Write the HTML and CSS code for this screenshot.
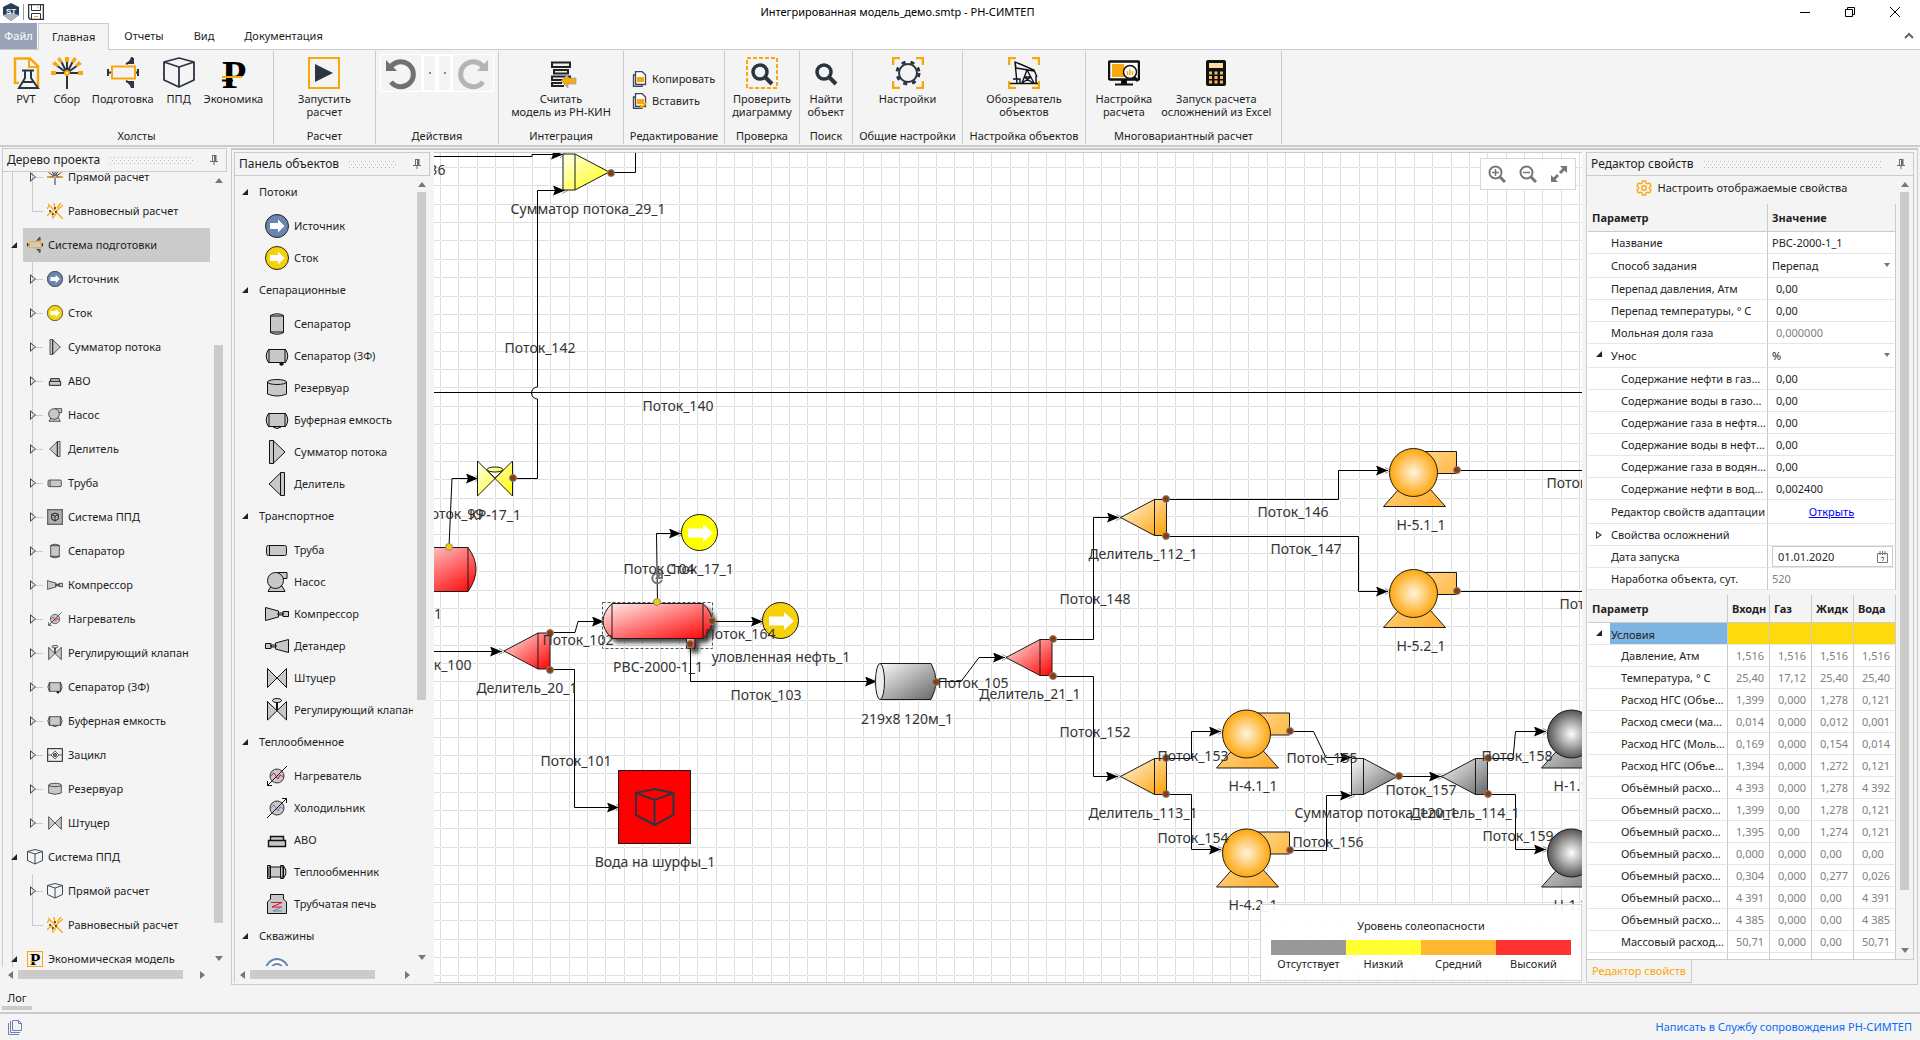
FILE: index.html
```html
<!DOCTYPE html>
<html lang="ru">
<head>
    <meta charset="UTF-8">
    <meta name="viewport" content="width=device-width, initial-scale=1.0">
    <title>Интегрированная модель_демо.smtp - РН-СИМТЕП</title>
    <link rel="stylesheet" href="styles.css">
</head>
<body>

<!-- Shared icons -->
<svg class="sprite" aria-hidden="true">
    <defs>
        <symbol id="i-pin" viewBox="0 0 8 10"><path d="M2 0.500H6.500M2.500 0V6M0 6.500H8M4 6V10" stroke="#6b6b6b" fill="none"/><path d="M4 1H6.500V6H4Z" fill="#6b6b6b"/></symbol>
        <symbol id="i-collect" viewBox="0 0 32 32">
            <path d="M16 18V32M16 16V4M16 16L10 4M16 16L22 4M16 16L5 8M16 16L27 8M3 16H29" stroke="#2b3542" stroke-width="2" fill="none"/>
            <path d="M14 0H18V5H14ZM6 2L9 0L12 5L9 6ZM26 2L23 0L20 5L23 6ZM1 7L4 4L8 8L6 10ZM31 7L28 4L24 8L26 10ZM0 14H5V18H0ZM27 14H32V18H27Z" fill="#f9a70b"/>
            <circle cx="16" cy="16" r="2" fill="#fff" stroke="#f9a70b" stroke-width="2"/>
        </symbol>
        <symbol id="i-prep" viewBox="0 0 32 32">
            <path d="M1 12V19M31 12V19M1 15.500H4M28 15.500H31M19 7Q24 5 25 0M19 24Q24 26 25 31M26 1V7M26 24V31" fill="none" stroke="#2b3542" stroke-width="2"/>
            <path d="M20 7L25 3V7ZM20 24L25 28V24Z" fill="#2b3542"/>
            <rect x="5" y="9.500" width="23" height="12" fill="none" stroke="#f9a70b" stroke-width="2"/>
        </symbol>
        <symbol id="i-cube" viewBox="0 0 32 32"><path d="M16 1L31 5V23L16 30L1 23V5ZM1 5L16 10L31 5M16 10V30" fill="none" stroke="#2b3542" stroke-width="1.800" stroke-linejoin="round"/></symbol>
        <symbol id="i-balance" viewBox="0 0 16 16"><path d="M1 1L16 16M0 13L5 8M5 8L6 16M2 3L0 6M10 5L14 0M9 8L16 2M8 7L7 0M7 14L10 8" stroke="#f9a70b" stroke-width="1.300" fill="none"/><g fill="#2b3542"><circle cx="3" cy="8" r="1"/><circle cx="8" cy="5" r="1"/><circle cx="9" cy="9" r="1"/><circle cx="6" cy="11" r="1"/></g></symbol>
        <symbol id="i-ruble" viewBox="0 0 16 16"><rect x="0.500" y="0.500" width="15" height="15" fill="none" stroke="#f9a70b"/><text x="3" y="14" font-family="Liberation Serif, serif" font-weight="bold" font-size="17">Р</text><path d="M3 10.500H9" stroke="#f9a70b"/></symbol>
        <symbol id="i-source" viewBox="0 0 24 24"><circle cx="12" cy="12" r="11.500" fill="#6985b0" stroke="#222"/><path d="M5 9h8V5.500L19.500 12 13 18.500V15H5z" fill="#fff"/></symbol>
        <symbol id="i-sink" viewBox="0 0 24 24"><circle cx="12" cy="12" r="11.500" fill="#f5d10a" stroke="#222"/><path d="M5 9h8V5.500L19.500 12 13 18.500V15H5z" fill="#fff"/></symbol>
        <symbol id="i-sum" viewBox="0 0 24 24"><path d="M4.500 0.500H8.500V23.500H4.500ZM8.500 1L20 12L8.500 23Z" fill="#c8c8c8" stroke="#111"/></symbol>
        <symbol id="i-split" viewBox="0 0 24 24"><path d="M15.500 0.500H19.500V23.500H15.500ZM15.500 1L4 12L15.500 23Z" fill="#c8c8c8" stroke="#111"/></symbol>
        <symbol id="i-avo" viewBox="0 0 24 24"><path d="M3.500 12.500H20.500V18.500H3.500ZM5.500 12V8.500H18.500V12" fill="#c8c8c8" stroke="#111" stroke-width="1.400"/></symbol>
        <symbol id="i-pump" viewBox="0 0 24 24"><path d="M12 2.500H22V8.500H17M3 21.500L6 16H17L20 21.500Z" fill="#c8c8c8" stroke="#111"/><circle cx="10.500" cy="10.500" r="8" fill="#c8c8c8" stroke="#111"/></symbol>
        <symbol id="i-pipe" viewBox="0 0 24 24"><rect x="1.500" y="7.500" width="20" height="10" rx="2" fill="#c8c8c8" stroke="#111"/><path d="M4.500 8V17" stroke="#111"/></symbol>
        <symbol id="i-ppd" viewBox="0 0 24 24"><rect x="1" y="1" width="22" height="22" fill="#b0b0b0" stroke="#666" stroke-width="2"/><path d="M12 6L17 8V15L12 18L7 15V8ZM7 8L12 11L17 8M12 11V18" fill="none" stroke="#222" stroke-width="1.500"/></symbol>
        <symbol id="i-sep" viewBox="0 0 24 24"><path d="M5.500 3.500Q12 0 18.500 3.500V20.500Q12 24 5.500 20.500ZM5.500 4H18.500M5.500 20H18.500" fill="#c8c8c8" stroke="#111"/></symbol>
        <symbol id="i-sep3" viewBox="0 0 24 24"><path d="M3.500 5.500Q-1 12 3.500 18.500H20.500Q25 12 20.500 5.500ZM4 5V19M20 5V19" fill="#c8c8c8" stroke="#111"/><path d="M15 19h3v2h-3z" stroke="#111"/></symbol>
        <symbol id="i-buffer" viewBox="0 0 24 24"><path d="M3.500 5.500Q-1 12 3.500 18.500H20.500Q25 12 20.500 5.500ZM4 5V19M20 5V19M8 19Q12 22 16 19" fill="#c8c8c8" stroke="#111"/></symbol>
        <symbol id="i-tank" viewBox="0 0 24 24"><path d="M2.500 6V18Q12 22 21.500 18V6" fill="#c8c8c8" stroke="#111"/><ellipse cx="12" cy="6" rx="9.500" ry="2.500" fill="#c8c8c8" stroke="#111"/></symbol>
        <symbol id="i-comp" viewBox="0 0 24 24"><path d="M0.500 5.500L13.500 9V15L0.500 18.500ZM13 11H18V13H13ZM18 9.500H23.500V14.500H18Z" fill="#c8c8c8" stroke="#111"/></symbol>
        <symbol id="i-exp" viewBox="0 0 24 24"><path d="M23.500 5.500L10.500 9V15L23.500 18.500ZM6 11H11V13H6ZM0.500 9.500H6V14.500H0.500Z" fill="#c8c8c8" stroke="#111"/></symbol>
        <symbol id="i-choke" viewBox="0 0 24 24"><path d="M2.500 2.500L21.500 21.500V2.500L2.500 21.500Z" fill="#c8c8c8" stroke="#111"/></symbol>
        <symbol id="i-valve" viewBox="0 0 24 24"><path d="M2.500 3.500L21.500 22V3.500L2.500 22Z" fill="#c8c8c8" stroke="#111"/><path d="M12 3V12" stroke="#111" stroke-width="2"/><ellipse cx="12" cy="2.500" rx="4.500" ry="2" fill="#ddd" stroke="#111"/></symbol>
        <symbol id="i-heater" viewBox="0 0 24 24"><circle cx="12" cy="12" r="7" fill="#c8c8c8" stroke="#333"/><path d="M5.500 12L9 9L13 15L15 11L19 13" fill="none" stroke="#d01040"/><path d="M22 2L2.500 21.500M2.500 17V21.500H7" fill="none" stroke="#111"/></symbol>
        <symbol id="i-cooler" viewBox="0 0 24 24"><circle cx="12" cy="12" r="7" fill="#c8c8c8" stroke="#333"/><path d="M5.500 12L9 9L13 15L15 11L19 13" fill="none" stroke="#6985b0"/><path d="M2 22L21.500 2.500M17 2.500H21.500V7" fill="none" stroke="#111"/></symbol>
        <symbol id="i-exch" viewBox="0 0 24 24"><path d="M4 7H18V17H4ZM2.500 5.500H5.500V18.500H2.500ZM15.500 5.500H18.500V18.500H15.500ZM18.500 6Q23.500 12 18.500 18Z" fill="#c8c8c8" stroke="#111"/></symbol>
        <symbol id="i-furnace" viewBox="0 0 24 24"><path d="M5.500 2.500H18.500V7L21.500 10V21.500H2.500V10L5.500 7Z" fill="#c8c8c8" stroke="#111"/><path d="M6 10.500H17L7 15H17" fill="none" stroke="#d01040"/><path d="M17 15L8 19H17" fill="none" stroke="#6985b0"/></symbol>
        <symbol id="i-cycle" viewBox="0 0 24 24"><rect x="1" y="2.500" width="22" height="19" fill="#eee" stroke="#222" stroke-width="1.500"/><path d="M1 12H6L12 6L18 12L12 18L6 12M18 12H23" fill="none" stroke="#222"/><circle cx="12" cy="12" r="2.500" fill="#777" stroke="#222"/></symbol>
        <symbol id="i-well" viewBox="0 0 24 24"><circle cx="12" cy="12" r="11" fill="#fff" stroke="#6985b0" stroke-width="2"/><circle cx="12" cy="12" r="6" fill="none" stroke="#6985b0" stroke-width="2"/></symbol>
        <symbol id="i-gear" viewBox="0 0 16 16"><path d="M6.500 1h3l.5 2 1.500.8 2-.6L15 6l-1.500 1.300v1.400L15 10l-1.500 2.800-2-.6-1.500.8-.5 2h-3L6 13l-1.500-.8-2 .6L1 10l1.500-1.300V7.300L1 6l1.500-2.800 2 .6L6 3z" fill="none" stroke="#f9a70b" stroke-width="1.400"/><circle cx="8" cy="8" r="2.200" fill="none" stroke="#f9a70b" stroke-width="1.400"/></symbol>
        <symbol id="i-copy" viewBox="0 0 16 16"><path d="M3 4H1.500V15.500H10V14M3.500 0.500H10L13.500 4V13.500H3.500Z" fill="#fff" stroke="#3a4656" stroke-width="1.300"/><path d="M5 6H12V11H5Z" fill="#f9a70b"/></symbol>
        <symbol id="i-lens" viewBox="0 0 24 24"><circle cx="10" cy="10" r="7" fill="none" stroke="#2b3542" stroke-width="3.500"/><path d="M15 15L22 22" stroke="#2b3542" stroke-width="4"/></symbol>
        <symbol id="i-undo" viewBox="0 0 36 34"><path d="M7 12A12.500 12.500 0 1 1 8 26" fill="none" stroke="currentColor" stroke-width="5"/><path d="M3 4V15H14Z" fill="currentColor"/></symbol>

        <linearGradient id="red" x2="1" y2="1"><stop offset="0" stop-color="#fff0f0"/><stop offset="1" stop-color="#f00"/></linearGradient>
        <linearGradient id="orange" x2="1" y2="1"><stop offset="0" stop-color="#fff6e6"/><stop offset="1" stop-color="#ffa000"/></linearGradient>
        <linearGradient id="sand" x2="1" y2="1"><stop offset="0" stop-color="#ffe2b0"/><stop offset="1" stop-color="#ffa818"/></linearGradient>
        <linearGradient id="yellow" x2="1" y2="1"><stop offset="0" stop-color="#fffff0"/><stop offset="1" stop-color="#ff0"/></linearGradient>
        <linearGradient id="gray" x2="1" y2="1"><stop offset="0" stop-color="#fafafa"/><stop offset="1" stop-color="#666"/></linearGradient>
        <radialGradient id="orange-ball"><stop offset="0" stop-color="#fff4dc"/><stop offset="1" stop-color="#ffa60d"/></radialGradient>
        <radialGradient id="gray-ball"><stop offset="0" stop-color="#fff"/><stop offset="1" stop-color="#555"/></radialGradient>
        <marker id="arrow" markerUnits="userSpaceOnUse" markerWidth="16" markerHeight="10" refX="12" refY="5" orient="auto">
            <path d="M9 2L15 5L9 8" fill="none" stroke="#999"/>
            <path d="M0 0L12 5L0 10L2 5Z" fill="#000"/>
        </marker>
        <filter id="shadow" x="-10%" y="-20%" width="130%" height="170%"><feDropShadow dx="4" dy="4" stdDeviation="2" flood-opacity="0.700"/></filter>
        <path id="divider" d="M0 18L34 0H46V36H34ZM34 0V36" stroke="#1a1a1a"/>
        <path id="summator" d="M0 0H12L46 18L12 36H0ZM12 0V36" stroke="#1a1a1a"/>
        <circle id="port" r="3.500" fill="#8b3c0c" stroke="#8a8a8a"/>
        <circle id="gas-port" r="3.500" fill="#f5c800" stroke="#8a8a8a"/>
        <g id="pump" stroke="#1a1a1a">
            <path d="M0 -21H43V1H0ZM-30 34L-14 16H16L32 34Z" fill="url(#sand)"/>
            <circle r="24" fill="url(#orange-ball)"/>
        </g>
        <g id="pump-off" stroke="#1a1a1a">
            <path d="M0 -21H43V1H0ZM-30 34L-14 16H16L32 34Z" fill="url(#gray)"/>
            <circle r="24" fill="url(#gray-ball)"/>
        </g>
        <!-- 8 cells per tile -->
        <pattern id="grid" x="440" y="167" width="147" height="147" patternUnits="userSpaceOnUse">
            <path d="M0 0H147V1H0ZM0 18H147V19H0ZM0 37H147V38H0ZM0 55H147V56H0ZM0 73H147V74H0ZM0 92H147V93H0ZM0 110H147V111H0ZM0 129H147V130H0ZM0 0V147H1V0ZM18 0V147H19V0ZM37 0V147H38V0ZM55 0V147H56V0ZM73 0V147H74V0ZM92 0V147H93V0ZM110 0V147H111V0ZM129 0V147H130V0Z" fill="#dedede"/>
        </pattern>
    </defs>
</svg>

<header class="titlebar">
    <div class="quick">
        <svg width="16" height="18" viewBox="0 0 16 18"><path d="M8 0L16 4V12L8 18L0 12V4Z" fill="#24405e"/><path d="M0 12L8 10L16 12L8 18Z" fill="#a9b5c5"/><text x="3" y="11" class="logo-text">ST</text></svg>
        <span class="sep"></span>
        <button aria-label="Сохранить"><svg width="16" height="16" viewBox="0 0 16 16"><path d="M0.500 0.500H15.500V15.500H2.500L0.500 13.500Z" fill="none" stroke="#2b3542" stroke-width="1.500"/><path d="M3.500 1V6.500H12.500V1M3.500 15V9.500H12.500V15" fill="none" stroke="#2b3542"/><path d="M10 2.500V4.500M6 12.500H10" stroke="#f9a70b"/></svg></button>
    </div>
    <h1>Интегрированная модель_демо.smtp - РН-СИМТЕП</h1>
    <div class="window-buttons">
        <button aria-label="Свернуть"><svg width="12" height="12"><path d="M1 6.500H11" stroke="#000"/></svg></button>
        <button aria-label="Восстановить"><svg width="12" height="12"><path d="M1.500 3.500H8.500V10.500H1.500ZM3.500 3V1.500H10.500V8.500H9" fill="none" stroke="#000"/></svg></button>
        <button aria-label="Закрыть"><svg width="12" height="12"><path d="M1 1L11 11M11 1L1 11" stroke="#000"/></svg></button>
    </div>
</header>

<nav class="tabs">
    <button class="file">Файл</button>
    <button class="active">Главная</button>
    <button>Отчеты</button>
    <button>Вид</button>
    <button>Документация</button>
    <button class="collapse" aria-label="Свернуть ленту"><svg width="10" height="8"><path d="M1 6L5 2L9 6" fill="none" stroke="#666" stroke-width="2"/></svg></button>
</nav>

<section class="ribbon">
    <div class="group canvases">
        <div class="tools">
            <button class="big"><svg width="32" height="32" viewBox="0 0 32 32"><path d="M9 26H5V1.500H20L28 9V30" fill="none" stroke="#f9a70b" stroke-width="2.500"/><path d="M19 1V10H28" fill="none" stroke="#f9a70b" stroke-width="2"/><path d="M12 13.500H24M15 14V21L9 31H28L21 21V14M13 25H23" fill="none" stroke="#2b3542" stroke-width="2"/></svg>PVT</button>
            <button class="big"><svg width="32" height="32"><use href="#i-collect"/></svg>Сбор</button>
            <button class="big"><svg width="32" height="32"><use href="#i-prep"/></svg>Подготовка</button>
            <button class="big"><svg width="32" height="32"><use href="#i-cube"/></svg>ППД</button>
            <button class="big"><svg width="32" height="32"><text x="5" y="31" class="ruble">Р</text><path d="M5 23.500H16" stroke="#000" stroke-width="2"/><path d="M5 20H25" stroke="#f9a70b" stroke-width="2"/></svg>Экономика</button>
        </div>
        <h2>Холсты</h2>
    </div>
    <div class="group run">
        <div class="tools">
            <button class="big"><svg width="32" height="32"><rect x="1" y="1" width="30" height="30" fill="none" stroke="#f9a70b" stroke-width="2"/><path d="M7 7L25 16L7 25Z" fill="#2b3542"/></svg>Запустить<br>расчет</button>
        </div>
        <h2>Расчет</h2>
    </div>
    <div class="group actions">
        <div class="tools history">
            <button class="undo" aria-label="Отменить"><svg width="36" height="34"><use href="#i-undo"/></svg></button>
            <button class="drop" aria-label="Список отмены"><i></i></button>
            <button class="drop" aria-label="Список повтора"><i></i></button>
            <button class="redo" aria-label="Повторить"><svg width="36" height="34"><use href="#i-undo"/></svg></button>
        </div>
        <h2>Действия</h2>
    </div>
    <div class="group integration">
        <div class="tools">
            <button class="big"><svg width="32" height="32"><path d="M7 5.500H25V10H7ZM9 13H23V16.500H9ZM7 19.500H25V23H7ZM17 26H7V29H19" fill="#eee" stroke="#222" stroke-width="2"/><path d="M16 24L23 17V21H31V27H23V31Z" fill="#f9a70b" stroke="#6fa8dc" stroke-width="0.700"/></svg>Считать<br>модель из РН-КИН</button>
        </div>
        <h2>Интеграция</h2>
    </div>
    <div class="group editing">
        <div class="tools stack">
            <button><svg width="16" height="16"><use href="#i-copy"/></svg>Копировать</button>
            <button><svg width="16" height="16"><use href="#i-copy"/><path d="M8 12L10 14L14 10" fill="none" stroke="#f9a70b" stroke-width="2"/></svg>Вставить</button>
        </div>
        <h2>Редактирование</h2>
    </div>
    <div class="group check">
        <div class="tools">
            <button class="big"><svg width="32" height="32"><rect x="1" y="1" width="30" height="30" fill="none" stroke="#f9a70b" stroke-width="2" stroke-dasharray="4 2"/><use href="#i-lens" x="4" y="5" width="24" height="24"/></svg>Проверить<br>диаграмму</button>
        </div>
        <h2>Проверка</h2>
    </div>
    <div class="group search">
        <div class="tools">
            <button class="big"><svg width="32" height="32"><use href="#i-lens" x="4" y="5" width="24" height="24"/></svg>Найти<br>объект</button>
        </div>
        <h2>Поиск</h2>
    </div>
    <div class="group settings">
        <div class="tools">
            <button class="big"><svg width="32" height="32"><path d="M1 8V1H8M24 1H31V8M31 24V31H24M8 31H1V24" fill="none" stroke="#f9a70b" stroke-width="2.500"/><circle cx="16" cy="16" r="9" fill="none" stroke="#2b3542" stroke-width="2"/><circle cx="16" cy="16" r="11" fill="none" stroke="#2b3542" stroke-width="3" stroke-dasharray="4 5"/></svg>Настройки</button>
        </div>
        <h2>Общие настройки</h2>
    </div>
    <div class="group objects-setup">
        <div class="tools">
            <button class="big"><svg width="32" height="32"><path d="M1 8V1H8M24 1H31V8M31 24V31H24M8 31H1V24" fill="none" stroke="#f9a70b" stroke-width="2.500"/><path d="M2 26.500H30M9 26L7 5L12 7L26 13L29 20M7 5L8 11L26 14M19 13L14 26M19 13L26 26M16 20H23M14 26L23 20M25 26L16 20M5 22H12V26M28 19V26" fill="none" stroke="#111" stroke-width="1.400"/></svg>Обозреватель<br>объектов</button>
        </div>
        <h2>Настройка объектов</h2>
    </div>
    <div class="group multi">
        <div class="tools">
            <button class="big"><svg width="32" height="32"><rect x="1" y="4.500" width="30" height="18" rx="1" fill="#fff" stroke="#111" stroke-width="2.500"/><path d="M4 7H16V20H4Z" fill="#f9a70b"/><path d="M7 27.500H25M14 23V27H18V23" stroke="#111" stroke-width="2"/><circle cx="22" cy="15" r="6.500" fill="#fff" stroke="#111" stroke-width="1.500"/><path d="M19.500 18V14M22 18V12M24.500 18V14" stroke="#f9a70b" stroke-width="1.500"/><path d="M26 20L30 24" stroke="#111" stroke-width="2.500"/></svg>Настройка<br>расчета</button>
            <button class="big"><svg width="32" height="32"><rect x="6" y="3" width="20" height="26" rx="2" fill="#111"/><path d="M9 6H23V11H9Z" fill="#ffd9a0"/><path d="M9 16H23M9 20.500H23M9 25H23" stroke="#f9b95a" stroke-width="3" stroke-dasharray="3 2.500"/></svg>Запуск расчета<br>осложнений из Excel</button>
        </div>
        <h2>Многовариантный расчет</h2>
    </div>
</section>

<main class="workspace">

    <aside class="project">
        <div class="panel-head">
            <h3>Дерево проекта</h3><span class="grip"></span>
            <button aria-label="Закрепить"><svg width="8" height="10"><use href="#i-pin"/></svg></button>
        </div>
        <div class="panel-body">
            <div class="view">
                <ul class="tree">
                    <li class="leaf closed"><svg><use href="#i-collect"/></svg>Прямой расчет</li>
                    <li class="leaf last"><svg><use href="#i-balance"/></svg>Равновесный расчет</li>
                    <li class="root selected"><span><svg><use href="#i-prep"/></svg>Система подготовки</span></li>
                    <li class="leaf closed"><svg><use href="#i-source"/></svg>Источник</li>
                    <li class="leaf closed"><svg><use href="#i-sink"/></svg>Сток</li>
                    <li class="leaf closed"><svg><use href="#i-sum"/></svg>Сумматор потока</li>
                    <li class="leaf closed"><svg><use href="#i-avo"/></svg>АВО</li>
                    <li class="leaf closed"><svg><use href="#i-pump"/></svg>Насос</li>
                    <li class="leaf closed"><svg><use href="#i-split"/></svg>Делитель</li>
                    <li class="leaf closed"><svg><use href="#i-pipe"/></svg>Труба</li>
                    <li class="leaf closed"><svg><use href="#i-ppd"/></svg>Система ППД</li>
                    <li class="leaf closed"><svg><use href="#i-sep"/></svg>Сепаратор</li>
                    <li class="leaf closed"><svg><use href="#i-comp"/></svg>Компрессор</li>
                    <li class="leaf closed"><svg><use href="#i-heater"/></svg>Нагреватель</li>
                    <li class="leaf closed"><svg><use href="#i-valve"/></svg>Регулирующий клапан</li>
                    <li class="leaf closed"><svg><use href="#i-sep3"/></svg>Сепаратор (3Ф)</li>
                    <li class="leaf closed"><svg><use href="#i-buffer"/></svg>Буферная емкость</li>
                    <li class="leaf closed"><svg><use href="#i-cycle"/></svg>Зацикл</li>
                    <li class="leaf closed"><svg><use href="#i-tank"/></svg>Резервуар</li>
                    <li class="leaf closed last"><svg><use href="#i-choke"/></svg>Штуцер</li>
                    <li class="root"><span><svg><use href="#i-cube"/></svg>Система ППД</span></li>
                    <li class="leaf closed"><svg><use href="#i-cube"/></svg>Прямой расчет</li>
                    <li class="leaf last"><svg><use href="#i-balance"/></svg>Равновесный расчет</li>
                    <li class="root"><span><svg><use href="#i-ruble"/></svg>Экономическая модель</span></li>
                </ul>
            </div>
            <div class="vscroll"><b class="up"></b><i class="track tree-v"></i><b class="down"></b></div>
        </div>
        <div class="hscroll"><b class="left"></b><i class="track tree-h"></i><b class="right"></b></div>
    </aside>

    <div class="dock">
        <aside class="palette">
            <div class="panel-head">
                <h3>Панель объектов</h3><span class="grip"></span>
                <button aria-label="Закрепить"><svg width="8" height="10"><use href="#i-pin"/></svg></button>
            </div>
            <div class="panel-body">
                <div class="view">
                    <h4>Потоки</h4>
                    <ul>
                        <li><svg><use href="#i-source"/></svg>Источник</li>
                        <li><svg><use href="#i-sink"/></svg>Сток</li>
                    </ul>
                    <h4>Сепарационные</h4>
                    <ul>
                        <li><svg><use href="#i-sep"/></svg>Сепаратор</li>
                        <li><svg><use href="#i-sep3"/></svg>Сепаратор (3Ф)</li>
                        <li><svg><use href="#i-tank"/></svg>Резервуар</li>
                        <li><svg><use href="#i-buffer"/></svg>Буферная емкость</li>
                        <li><svg><use href="#i-sum"/></svg>Сумматор потока</li>
                        <li><svg><use href="#i-split"/></svg>Делитель</li>
                    </ul>
                    <h4>Транспортное</h4>
                    <ul>
                        <li><svg><use href="#i-pipe"/></svg>Труба</li>
                        <li><svg><use href="#i-pump"/></svg>Насос</li>
                        <li><svg><use href="#i-comp"/></svg>Компрессор</li>
                        <li><svg><use href="#i-exp"/></svg>Детандер</li>
                        <li><svg><use href="#i-choke"/></svg>Штуцер</li>
                        <li><svg><use href="#i-valve"/></svg>Регулирующий клапан</li>
                    </ul>
                    <h4>Теплообменное</h4>
                    <ul>
                        <li><svg><use href="#i-heater"/></svg>Нагреватель</li>
                        <li><svg><use href="#i-cooler"/></svg>Холодильник</li>
                        <li><svg><use href="#i-avo"/></svg>АВО</li>
                        <li><svg><use href="#i-exch"/></svg>Теплообменник</li>
                        <li><svg><use href="#i-furnace"/></svg>Трубчатая печь</li>
                    </ul>
                    <h4>Скважины</h4>
                    <ul>
                        <li><svg><use href="#i-well"/></svg></li>
                    </ul>
                </div>
                <div class="vscroll"><b class="up"></b><i class="track palette-v"></i><b class="down"></b></div>
            </div>
            <div class="hscroll"><b class="left"></b><i class="track palette-h"></i><b class="right"></b></div>
        </aside>

        <section class="canvas">
            <svg class="scheme" width="100%" height="100%">
                <g transform="translate(-434 -153)">
                    <rect x="434" y="153" width="100%" height="100%" fill="url(#grid)"/>

                    <g class="pipes">
                        <path d="M434 156.500H532V154.500H563" marker-end="url(#arrow)"/>
                        <path d="M611 172.500H635.500V150"/>
                        <path d="M513 478.500H537.500V399A6 6 0 0 1 537.500 387V190.500H565" marker-end="url(#arrow)"/>
                        <path d="M434 392.500H1600"/>
                        <path d="M449 547L452 478.500H478" marker-end="url(#arrow)"/>
                        <path d="M434 651.500H502" marker-end="url(#arrow)"/>
                        <path d="M550 632.500H575L578 621.500H604" marker-end="url(#arrow)"/>
                        <path d="M550 669.500H574.500V807.500H619" marker-end="url(#arrow)"/>
                        <path d="M657.500 602L656.500 533.500H681" marker-end="url(#arrow)"/>
                        <path d="M713 621.500H763" marker-end="url(#arrow)"/>
                        <path d="M690.500 646V681.500H877" marker-end="url(#arrow)"/>
                        <path d="M937 681.500H961L979 657.500H1005" marker-end="url(#arrow)"/>
                        <path d="M1053 639.500H1093.500V517.500H1119" marker-end="url(#arrow)"/>
                        <path d="M1053 676.500H1093.500V776.500H1118" marker-end="url(#arrow)"/>
                        <path d="M1166 499.500H1338.500V470.500H1388" marker-end="url(#arrow)"/>
                        <path d="M1166 536.500H1358.500V591.500H1388" marker-end="url(#arrow)"/>
                        <path d="M1457 470.500H1600M1457 591.500H1600"/>
                        <path d="M1166 758.500H1191.500V731.500H1221" marker-end="url(#arrow)"/>
                        <path d="M1166 794.500H1191.500V849.500H1221" marker-end="url(#arrow)"/>
                        <path d="M1290 731.500H1313.500L1326 757.500H1352" marker-end="url(#arrow)"/>
                        <path d="M1290 850.500H1326.500V795.500H1352" marker-end="url(#arrow)"/>
                        <path d="M1400 776.500H1441" marker-end="url(#arrow)"/>
                        <path d="M1488 758.500H1513L1515.500 731.500H1546" marker-end="url(#arrow)"/>
                        <path d="M1488 794.500H1515.500V849.500H1546" marker-end="url(#arrow)"/>
                    </g>

                    <use href="#summator" x="563" y="154" fill="url(#yellow)"/>
                    <g fill="url(#yellow)" stroke="#1a1a1a">
                        <ellipse cx="495" cy="469.500" rx="8" ry="2.500"/>
                        <path d="M477.500 461L512.500 496V461L477.500 496Z"/>
                        <path d="M495 478L487 470M495 478L503 470"/>
                    </g>
                    <path d="M400 547.500H468Q484 569 468 591.500H400ZM468 547.500V591.500" fill="url(#red)" stroke="#1a1a1a"/>
                    <use href="#divider" x="504" y="633" fill="url(#red)"/>
                    <g filter="url(#shadow)" fill="url(#red)" stroke="#1a1a1a">
                        <path d="M686.500 638H695V648.500H686.500Z"/>
                        <path d="M612 603.500H703Q721 621 703 638.500H612Q594 621 612 603.500ZM612 603.500V638.500M703 603.500V638.500"/>
                    </g>
                    <path d="M602.500 602.500H712.500V648.500H602.500Z" fill="none" stroke="#555" stroke-dasharray="3 2"/>
                    <path d="M660 574A5 5 0 1 0 662 580M657 578H662V572Z" fill="none" stroke="#777" stroke-width="2"/>
                    <circle cx="699.500" cy="532.500" r="18" fill="#ff0" stroke="#1a1a1a"/>
                    <path d="M688 528.500H703V524L713 533L703 542V537.500H688Z" fill="#fff"/>
                    <circle cx="780.500" cy="620.500" r="18" fill="#f5d10a" stroke="#1a1a1a"/>
                    <path d="M769 616.500H784V612L794 621L784 630V625.500H769Z" fill="#fff"/>
                    <path d="M880 663.500H931Q941 681 931 699.500H880Z" fill="url(#gray)" stroke="#1a1a1a"/>
                    <ellipse cx="880" cy="681.500" rx="4.500" ry="18" fill="#eee" stroke="#1a1a1a"/>
                    <rect x="618.500" y="770.500" width="72" height="73" fill="#f00" stroke="#1a1a1a"/>
                    <path d="M654.500 789L673.500 793V815L654.500 825L636 815V793ZM636 793L654.500 800L673.500 793M654.500 800V825" fill="none" stroke="#2b3542" stroke-width="2"/>
                    <use href="#divider" x="1006" y="639.500" fill="url(#red)"/>
                    <use href="#divider" x="1120.500" y="499.500" fill="url(#orange)"/>
                    <use href="#divider" x="1120.500" y="758.500" fill="url(#orange)"/>
                    <use href="#divider" x="1441.500" y="758.500" fill="url(#gray)"/>
                    <use href="#summator" x="1351.500" y="758.500" fill="url(#gray)"/>
                    <use href="#pump" x="1413.500" y="472.500"/>
                    <use href="#pump" x="1413.500" y="593.500"/>
                    <use href="#pump" x="1246.500" y="734"/>
                    <use href="#pump" x="1246.500" y="853"/>
                    <use href="#pump-off" x="1571.500" y="734"/>
                    <use href="#pump-off" x="1571.500" y="853"/>

                    <use href="#port" x="611" y="173"/><use href="#port" x="513" y="478"/>
                    <use href="#port" x="550" y="633"/><use href="#port" x="550" y="670"/>
                    <use href="#port" x="712" y="621"/><use href="#port" x="690" y="644"/>
                    <use href="#port" x="936" y="682"/><use href="#port" x="1053" y="639"/>
                    <use href="#port" x="1053" y="676"/><use href="#port" x="1166" y="499"/>
                    <use href="#port" x="1166" y="536"/><use href="#port" x="1457" y="470"/>
                    <use href="#port" x="1457" y="591"/><use href="#port" x="1166" y="758"/>
                    <use href="#port" x="1166" y="794"/><use href="#port" x="1290" y="731"/>
                    <use href="#port" x="1290" y="850"/><use href="#port" x="1399" y="776"/>
                    <use href="#port" x="1488" y="758"/><use href="#port" x="1488" y="794"/>
                    <use href="#gas-port" x="449" y="547"/><use href="#gas-port" x="657" y="602"/>

                    <g class="labels">
                        <text x="414" y="175">Поток_36</text>
                        <text x="588" y="214">Сумматор потока_29_1</text>
                        <text x="540" y="353">Поток_142</text>
                        <text x="678" y="411">Поток_140</text>
                        <text x="452" y="519">Поток_99</text>
                        <text x="495" y="520">КР-17_1</text>
                        <text x="659" y="574">Поток_104</text>
                        <text x="700" y="574">Сток_17_1</text>
                        <text x="417" y="619">С-2_1_1</text>
                        <text x="436" y="670">Поток_100</text>
                        <text x="578" y="645">Поток_102</text>
                        <text x="527" y="693">Делитель_20_1</text>
                        <text x="658" y="672">РВС-2000-1_1</text>
                        <text x="740" y="639">Поток_164</text>
                        <text x="781" y="662">уловленная нефть_1</text>
                        <text x="766" y="700">Поток_103</text>
                        <text x="907" y="724">219x8 120м_1</text>
                        <text x="576" y="766">Поток_101</text>
                        <text x="655" y="867">Вода на шурфы_1</text>
                        <text x="973" y="688">Поток_105</text>
                        <text x="1030" y="699">Делитель_21_1</text>
                        <text x="1095" y="604">Поток_148</text>
                        <text x="1095" y="737">Поток_152</text>
                        <text x="1143" y="559">Делитель_112_1</text>
                        <text x="1293" y="517">Поток_146</text>
                        <text x="1306" y="554">Поток_147</text>
                        <text x="1421" y="530">Н-5.1_1</text>
                        <text x="1421" y="651">Н-5.2_1</text>
                        <text x="1582" y="488">Поток_149</text>
                        <text x="1595" y="609">Поток_150</text>
                        <text x="1143" y="818">Делитель_113_1</text>
                        <text x="1193" y="761">Поток_153</text>
                        <text x="1193" y="843">Поток_154</text>
                        <text x="1322" y="763">Поток_155</text>
                        <text x="1328" y="847">Поток_156</text>
                        <text x="1253" y="791">Н-4.1_1</text>
                        <text x="1253" y="910">Н-4.2_1</text>
                        <text x="1376" y="818">Сумматор потока_120_1</text>
                        <text x="1421" y="795">Поток_157</text>
                        <text x="1465" y="818">Делитель_114_1</text>
                        <text x="1517" y="761">Поток_158</text>
                        <text x="1518" y="841">Поток_159</text>
                        <text x="1578" y="791">Н-1.1_1</text>
                        <text x="1578" y="910">Н-1.2_1</text>
                    </g>
                </g>
            </svg>
            <div class="zoom">
                <button aria-label="Увеличить"><svg width="18" height="18"><circle cx="7.500" cy="7.500" r="6" fill="none" stroke="#777" stroke-width="2"/><path d="M4 7.500H11M7.500 4V11" stroke="#777" stroke-width="1.500"/><path d="M12 12L17 17" stroke="#777" stroke-width="3"/></svg></button>
                <button aria-label="Уменьшить"><svg width="18" height="18"><circle cx="7.500" cy="7.500" r="6" fill="none" stroke="#777" stroke-width="2"/><path d="M4 7.500H11" stroke="#777" stroke-width="1.500"/><path d="M12 12L17 17" stroke="#777" stroke-width="3"/></svg></button>
                <button aria-label="По размеру"><svg width="18" height="18"><path d="M10 1H17V8ZM1 10V17H8Z" fill="#777"/><path d="M14 4L10 8M4 14L8 10" stroke="#777" stroke-width="3"/></svg></button>
            </div>
            <div class="legend">
                <h4>Уровень солеопасности</h4>
                <ul>
                    <li class="none">Отсутствует</li>
                    <li class="low">Низкий</li>
                    <li class="mid">Средний</li>
                    <li class="high">Высокий</li>
                </ul>
            </div>
        </section>

        <aside class="props">
            <div class="props-frame">
                <div class="panel-head">
                    <h3>Редактор свойств</h3><span class="grip"></span>
                    <button aria-label="Закрепить"><svg width="8" height="10"><use href="#i-pin"/></svg></button>
                </div>
                <div class="panel-body">
                    <div class="view">
                        <button class="configure"><svg width="16" height="16"><use href="#i-gear"/></svg>Настроить отображаемые свойства</button>
                        <table class="params">
                            <thead><tr><th>Параметр</th><th>Значение</th></tr></thead>
                            <tbody>
                                <tr><td><label for="p1">Название</label></td><td><input id="p1" class="plain" value="РВС-2000-1_1"></td></tr>
                                <tr class="tall"><td><label for="p2">Способ задания</label></td><td class="pick"><select id="p2"><option>Перепад</option></select></td></tr>
                                <tr><td><label for="p3">Перепад давления, Атм</label></td><td><input id="p3" value="0,00"></td></tr>
                                <tr><td><label for="p4">Перепад температуры, ° С</label></td><td><input id="p4" value="0,00"></td></tr>
                                <tr><td><label for="p5">Мольная доля газа</label></td><td><input id="p5" value="0,000000" disabled></td></tr>
                                <tr class="tall"><td class="open"><label for="p6">Унос</label></td><td class="pick"><select id="p6"><option>%</option></select></td></tr>
                                <tr class="sub"><td><label for="p7">Содержание нефти в газовой фазе</label></td><td><input id="p7" value="0,00"></td></tr>
                                <tr class="sub"><td><label for="p8">Содержание воды в газовой фазе</label></td><td><input id="p8" value="0,00"></td></tr>
                                <tr class="sub"><td><label for="p9">Содержание газа в нефтяной фазе</label></td><td><input id="p9" value="0,00"></td></tr>
                                <tr class="sub"><td><label for="p10">Содержание воды в нефтяной фазе</label></td><td><input id="p10" value="0,00"></td></tr>
                                <tr class="sub"><td><label for="p11">Содержание газа в водяной фазе</label></td><td><input id="p11" value="0,00"></td></tr>
                                <tr class="sub"><td><label for="p12">Содержание нефти в водяной фазе</label></td><td><input id="p12" value="0,002400"></td></tr>
                                <tr class="tall"><td>Редактор свойств адаптации</td><td class="center"><a href="#">Открыть</a></td></tr>
                                <tr><td class="shut">Свойства осложнений</td><td></td></tr>
                                <tr><td><label for="p13">Дата запуска</label></td><td><div class="date"><input id="p13" class="plain" value="01.01.2020"><svg width="11" height="12"><path d="M0.500 2.500H10.500V11.500H0.500ZM3 0V4M5.500 0V4M8 0V4" fill="none" stroke="#777"/><path d="M4 6.500H7L5.500 10" fill="none" stroke="#777"/></svg></div></td></tr>
                                <tr><td><label for="p14">Наработка объекта, сут.</label></td><td><input id="p14" class="plain" value="520" disabled></td></tr>
                            </tbody>
                        </table>
                        <table class="streams">
                            <thead><tr><th>Параметр</th><th>Входн</th><th>Газ</th><th>Жидк</th><th>Вода</th></tr></thead>
                            <tbody>
                                <tr class="section"><td class="open"><span>Условия</span></td><td></td><td></td><td></td><td></td></tr>
                                <tr><td>Давление, Атм</td><td>1,516</td><td>1,516</td><td>1,516</td><td>1,516</td></tr>
                                <tr><td>Температура, ° С</td><td>25,40</td><td>17,12</td><td>25,40</td><td>25,40</td></tr>
                                <tr><td>Расход НГС (Объемный)</td><td>1,399</td><td>0,000</td><td>1,278</td><td>0,121</td></tr>
                                <tr><td>Расход смеси (массовый)</td><td>0,014</td><td>0,000</td><td>0,012</td><td>0,001</td></tr>
                                <tr><td>Расход НГС (Мольный)</td><td>0,169</td><td>0,000</td><td>0,154</td><td>0,014</td></tr>
                                <tr><td>Расход НГС (Объемный)</td><td>1,394</td><td>0,000</td><td>1,272</td><td>0,121</td></tr>
                                <tr><td>Объёмный расход смеси</td><td>4 393</td><td>0,000</td><td>1,278</td><td>4 392</td></tr>
                                <tr><td>Объемный расход жидкости</td><td>1,399</td><td>0,00</td><td>1,278</td><td>0,121</td></tr>
                                <tr><td>Объемный расход жидкости</td><td>1,395</td><td>0,00</td><td>1,274</td><td>0,121</td></tr>
                                <tr><td>Объемный расход газа</td><td>0,000</td><td>0,000</td><td>0,00</td><td>0,00</td></tr>
                                <tr><td>Объемный расход нефти</td><td>0,304</td><td>0,000</td><td>0,277</td><td>0,026</td></tr>
                                <tr><td>Объемный расход воды</td><td>4 391</td><td>0,000</td><td>0,00</td><td>4 391</td></tr>
                                <tr><td>Объемный расход воды</td><td>4 385</td><td>0,000</td><td>0,00</td><td>4 385</td></tr>
                                <tr><td>Массовый расход газа</td><td>50,71</td><td>0,000</td><td>0,00</td><td>50,71</td></tr>
                                <tr><td></td><td></td><td></td><td></td><td></td></tr>
                            </tbody>
                        </table>
                    </div>
                    <div class="vscroll"><b class="up"></b><i class="track props-v"></i><b class="down"></b></div>
                </div>
            </div>
            <button class="props-tab">Редактор свойств</button>
        </aside>
    </div>
</main>

<div class="log"><button>Лог</button></div>

<footer class="status">
    <svg width="16" height="16"><path d="M5.500 1.500H11.500L14.500 4.500V11.500H5.500ZM11.500 1.500V4.500H14.500M3.500 2V13.500H13M1.500 4V15.500H12" fill="none" stroke="#6985b0"/></svg>
    <a href="#">Написать в Службу сопровождения РН-СИМТЕП</a>
</footer>

</body>
</html>
```

FILE: styles.css
```css
* {
    box-sizing: border-box;
}
body {
    margin: 0;
    height: 100vh;
    display: flex;
    flex-direction: column;
    overflow: hidden;
    background: #f4f4f4;
    color: #1e1e1e;
    font-family: "Noto Sans", "Open Sans", sans-serif;
    font-size: 11px;
    line-height: 16px;
}
button, input, select {
    font: inherit;
    color: inherit;
    border: 0;
    background: none;
    padding: 0;
    margin: 0;
}
h1, h2, h3, h4, ul {
    margin: 0;
    padding: 0;
    font-size: inherit;
    font-weight: normal;
    list-style: none;
}
svg {
    display: block;
    flex: none;
}
.sprite {
    position: absolute;
    width: 0;
    height: 0;
}

/* Title bar and tabs */
.titlebar {
    display: flex;
    align-items: center;
    height: 23px;
    background: #fff;
}
.titlebar h1 {
    flex: 1;
    color: #000;
    text-align: center;
}
.quick {
    display: flex;
    align-items: center;
    gap: 4px;
    padding-left: 3px;
}
.quick .sep {
    width: 1px;
    height: 16px;
    background: #999;
}
.logo-text {
    font: bold 8px "Liberation Sans", sans-serif;
    fill: #fff;
}
.window-buttons {
    display: flex;
    justify-content: flex-end;
    gap: 33px;
    width: 169px;
    padding-right: 19px;
}
.tabs {
    display: flex;
    height: 27px;
    background: #fff;
    border-bottom: 1px solid #cbcbcb;
}
.tabs button {
    padding: 0 15px;
}
.tabs .file {
    width: 37px;
    padding: 0;
    margin-right: 1px;
    background: #98a3b8;
    color: #fff;
}
.tabs .active {
    margin-bottom: -1px;
    padding: 0 13px;
    background: #f4f4f4;
    border: 1px solid #cbcbcb;
    border-bottom: 0;
}
.tabs .collapse {
    margin-left: auto;
    padding: 0 6px;
}

/* Ribbon */
.ribbon {
    display: flex;
    height: 97px;
    border-bottom: 2px solid #cbcbcb;
}
.group {
    display: flex;
    flex-direction: column;
    justify-content: space-between;
    margin: 1px 0;
    padding: 6px 0 0;
    border-right: 1px solid #cbcbcb;
    text-align: center;
    white-space: nowrap;
}
.group h2 {
    height: 16px;
}
.canvases { width: 274px; }
.run { width: 102px; }
.actions { width: 123px; }
.integration { width: 125px; }
.editing { width: 101px; }
.check { width: 75px; }
.search { width: 53px; }
.settings { width: 110px; }
.objects-setup { width: 123px; }
.multi { width: 196px; }
.tools {
    display: flex;
    justify-content: center;
    align-items: flex-start;
    gap: 9px;
}
.big {
    display: flex;
    flex-direction: column;
    align-items: center;
    min-width: 32px;
    line-height: 13px;
}
.big svg {
    margin-bottom: 3px;
}
.ruble {
    font: bold 40px "Liberation Serif", serif;
}
.history {
    gap: 0;
}
.history button {
    height: 38px;
    margin-top: -3px;
    padding: 1px 2px;
    border: 1px solid #fff;
}
.history .drop {
    width: 15px;
    border-width: 2px;
}
.undo {
    color: #707070;
}
.redo {
    color: #b4b4b4;
}
.redo svg {
    transform: scaleX(-1);
}
.drop i {
    display: block;
    width: 2px;
    height: 2px;
    margin: auto;
    background: #4a97d6;
}
.stack {
    flex-direction: column;
    gap: 6px;
    padding: 14px 0 0 8px;
}
.stack button {
    display: flex;
    gap: 4px;
}

/* Dock panels */
.workspace {
    display: flex;
    flex: 1;
    min-height: 0;
    padding: 1px 2px 0;
}
.project {
    display: flex;
    flex-direction: column;
    width: 225px;
    margin-right: 4px;
    padding-bottom: 3px;
}
.dock {
    display: flex;
    flex: 1;
    min-width: 0;
    padding: 2px 3px 1px 2px;
    border: 1px solid #cbcbcb;
    border-top-width: 2px;
}
.panel-head {
    display: flex;
    align-items: center;
    height: 24px;
    padding: 0 8px 0 4px;
    border: 1px solid #cbcbcb;
    font-size: 12px;
}
.grip {
    flex: 1;
    height: 7px;
    margin: 0 16px 0 10px;
    background-image: linear-gradient(90deg, #b5b5b5 1px, transparent 1px), linear-gradient(90deg, transparent 2px, #b5b5b5 2px, #b5b5b5 3px, transparent 3px), linear-gradient(90deg, #b5b5b5 1px, transparent 1px);
    background-size: 4px 1px;
    background-repeat: repeat-x;
    background-position: 0 0, 0 3px, 0 6px;
}
.panel-body {
    display: flex;
    flex: 1;
    min-height: 0;
}
.view {
    flex: 1;
    min-width: 0;
    overflow: hidden;
    white-space: nowrap;
}
.project .panel-body {
    border-left: 1px solid #cbcbcb;
}

/* Scrollbars */
.vscroll, .hscroll {
    display: flex;
    align-items: center;
}
.vscroll {
    flex-direction: column;
    width: 17px;
    padding: 6px 4px;
}
.hscroll {
    height: 15px;
    padding: 3px 22px 3px 6px;
}
.vscroll b, .hscroll b {
    border: 4px solid transparent;
}
.vscroll .up {
    border-top: 0;
    border-bottom: 5px solid #777;
}
.vscroll .down {
    border-bottom: 0;
    border-top: 5px solid #777;
}
.hscroll .left {
    border-left: 0;
    border-right: 5px solid #777;
}
.hscroll .right {
    border-right: 0;
    border-left: 5px solid #777;
}
.track {
    flex: 1;
    display: flex;
    margin: 5px 0;
}
.vscroll .track {
    flex-direction: column;
}
.hscroll .track {
    margin: 0 5px;
}
.track::before, .track::after {
    content: "";
    flex: 0 0 9px;
}
.track::before {
    background: #cbcbcb;
}
.vscroll .track::before {
    width: 9px;
}
.hscroll .track::before {
    height: 9px;
}
.tree-v::before { margin-top: 157px; flex: 1; }
.tree-v::after { flex-basis: 28px; }
.tree-h::before { flex: 0 0 165px; }
.palette-v::before { flex: 0 0 67%; }
.palette-h::before { flex: 0 0 125px; }
.props-v::before { flex: 0 0 93%; }

/* Project tree */
.tree {
    margin-top: -12px;
    background: linear-gradient(90deg, transparent 9px, #cbcbcb 9px, #cbcbcb 10px, transparent 10px);
}
.tree li {
    display: flex;
    align-items: center;
    height: 34px;
    position: relative;
}
.tree svg {
    width: 16px;
    height: 16px;
    margin-right: 5px;
}
.leaf {
    padding-left: 44px;
    background: linear-gradient(#cbcbcb, #cbcbcb) 29px 0 / 1px 100% no-repeat, linear-gradient(#cbcbcb, #cbcbcb) 29px 17px / 11px 1px no-repeat;
}
.leaf.last {
    background-size: 1px 17px, 11px 1px;
}
.closed::before {
    content: "";
    position: absolute;
    left: 27px;
    width: 6px;
    height: 10px;
    background: #444;
    clip-path: polygon(0 0, 100% 50%, 0 100%, 0 0, 1px 2px, 1px 8px, 5px 5px, 1px 2px);
}
.root {
    padding-left: 20px;
}
.root span {
    display: flex;
    flex: 1;
    align-items: center;
    height: 34px;
    padding-left: 4px;
}
.selected span {
    background: #cbcbcb;
}
.root::before, .open::before, .palette h4::before {
    content: "";
    width: 6px;
    height: 6px;
    background: #222;
    clip-path: polygon(100% 0, 100% 100%, 0 100%);
}
.root::before {
    position: absolute;
    left: 8px;
}
.project .view {
    flex: 0 0 207px;
}

/* Object palette */
.palette {
    display: flex;
    flex-direction: column;
    width: 196px;
    margin-right: 4px;
    border-left: 1px solid #cbcbcb;
}
.palette .panel-head {
    border-left: 0;
    flex: none;
}
.palette h4 {
    display: flex;
    align-items: center;
    gap: 11px;
    height: 34px;
    padding: 0 0 2px 7px;
}
.palette li {
    display: flex;
    align-items: center;
    gap: 5px;
    height: 32px;
    padding-left: 30px;
}
.palette li svg {
    width: 24px;
    height: 24px;
}
.palette .hscroll {
    height: 17px;
    padding: 4px 20px 4px 5px;
}

/* Scheme */
.canvas {
    position: relative;
    flex: 1;
    min-width: 0;
    overflow: hidden;
    background: #fff;
    border-top: 1px solid #cbcbcb;
    border-bottom: 1px solid #cbcbcb;
}
.scheme {
    position: absolute;
}
.pipes path {
    fill: none;
    stroke: #000;
}
.labels text {
    font-size: 14px;
    text-anchor: middle;
    fill: #333;
}
.zoom {
    position: absolute;
    top: 5px;
    right: 6px;
    display: flex;
    gap: 13px;
    padding: 6px 7px;
    border: 1px solid #d6d6d6;
    background: #fffffff0;
}
.legend {
    position: absolute;
    right: 0;
    bottom: 1px;
    width: 322px;
    height: 77px;
    padding: 13px 10px 0;
    border: 1px solid #d6d6d6;
    background: #ffffffe8;
    text-align: center;
}
.legend ul {
    display: flex;
    margin-top: 6px;
}
.legend li {
    flex: 1;
}
.legend li::before {
    content: "";
    display: block;
    height: 15px;
    margin-bottom: 1px;
}
.none::before { background: #999; }
.low::before { background: #ffff32; }
.mid::before { background: #ffb732; }
.high::before { background: #ff3232; }

/* Properties */
.props {
    display: flex;
    flex-direction: column;
    align-items: flex-start;
    width: 328px;
    margin-left: 4px;
}
.props-frame {
    display: flex;
    flex-direction: column;
    flex: 1;
    width: 100%;
    min-height: 0;
    border: 1px solid #cbcbcb;
    border-top: 0;
}
.props .panel-head {
    flex: none;
    border-width: 1px 0;
}
.props-tab {
    height: 23px;
    width: 106px;
    border: 1px solid #cbcbcb;
    border-top: 0;
    color: #f9a70b;
}
.configure {
    display: flex;
    justify-content: center;
    align-items: center;
    gap: 6px;
    width: 100%;
    height: 28px;
    padding-bottom: 4px;
}
table {
    width: 100%;
    table-layout: fixed;
    border-collapse: separate;
    border-spacing: 0;
    background: #fff;
    border-left: 1px solid #fff;
}
th {
    height: 28px;
    padding: 0 4px;
    text-align: left;
    background: #f4f4f4;
    border-bottom: 1px solid #cbcbcb;
}
th, td {
    border-right: 1px solid #cbcbcb;
    overflow: hidden;
}
td {
    height: 22px;
    padding: 0 4px;
    line-height: 21px;
    border-bottom: 1px solid #e6e6e6;
}
td:first-child {
    padding: 0 1px 0 23px;
    text-overflow: ellipsis;
}
.sub td:first-child, .streams td:first-child {
    padding-left: 33px;
}
.tall td {
    height: 24px;
}
.params th:first-child {
    width: 180px;
}
.params td:last-child {
    overflow: visible;
}
.params input, .params select {
    display: block;
    width: 100%;
    height: 21px;
    padding: 0 4px;
    appearance: none;
}
.params .plain, .params select {
    padding: 0;
}
input:disabled {
    color: #808080;
}
.pick {
    position: relative;
}
.pick::after {
    content: "";
    position: absolute;
    right: 5px;
    top: 9px;
    border: 3px solid transparent;
    border-top: 4px solid #777;
    border-bottom: 0;
}
.center {
    text-align: center;
}
.center a {
    color: #00f;
}
.open, .shut {
    position: relative;
}
.open::before, .shut::before {
    position: absolute;
    left: 8px;
    top: 7px;
}
.shut::before {
    content: "";
    width: 6px;
    height: 8px;
    background: #333;
    clip-path: polygon(0 0, 100% 50%, 0 100%, 0 0, 1px 2px, 1px 6px, 4px 4px, 1px 2px);
}
.params .date {
    display: flex;
    align-items: center;
    height: 21px;
    margin-right: -2px;
    padding: 0 4px 0 5px;
    border: 1px solid #cbcbcb;
}
.date input {
    flex: 1;
    min-width: 0;
}
.streams {
    margin-top: 5px;
}
.streams th:not(:first-child) {
    width: 42px;
}
.streams td:not(:first-child) {
    padding: 0 2px 0 8px;
    color: #808080;
}
.streams .section td {
    background: #ffdb0d;
}
.streams .section td:first-child {
    padding: 0 0 0 22px;
    background: #fff;
}
.section span {
    display: block;
    height: 22px;
    padding-left: 1px;
    margin-bottom: -1px;
    line-height: 24px;
    background: #7eb4e2;
}

/* Bottom */
.log {
    height: 27px;
    padding: 4px 2px 0;
}
.log button {
    width: 30px;
    height: 21px;
    border-bottom: 4px solid #cbcbcb;
}
.status {
    display: flex;
    justify-content: space-between;
    align-items: center;
    height: 28px;
    padding: 0 8px 0 7px;
    border-top: 2px solid #cbcbcb;
}
.status a {
    color: #0a6cf5;
    text-decoration: none;
}
```
